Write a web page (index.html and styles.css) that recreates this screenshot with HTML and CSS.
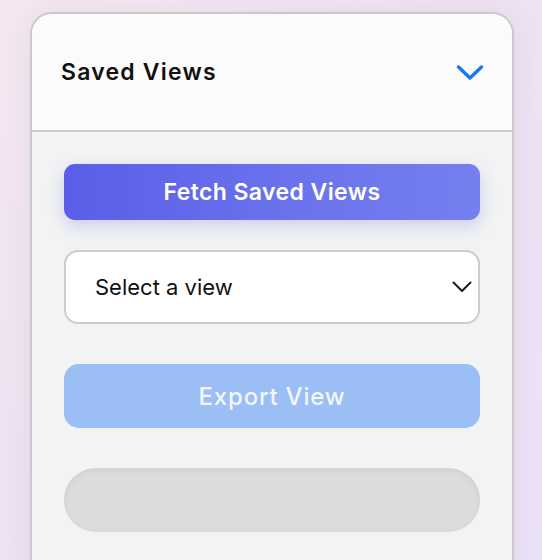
FILE: index.html
```html
<!DOCTYPE html>
<html>
<head>
<meta charset="utf-8">
<link rel="stylesheet" href="styles.css">
</head>
<body>
<div class="card">
  <div class="header">
    <h2 class="title">Saved Views</h2>
    <svg class="chev" width="28" height="18" viewBox="0 0 28 18"><path d="M2.5 3 L14 14 L25.5 3" fill="none" stroke="#1877f2" stroke-width="3.4" stroke-linecap="round" stroke-linejoin="round"/></svg>
  </div>
  <div class="body">
    <button class="btn-fetch">Fetch Saved Views</button>
    <div class="select">
      <span>Select a view</span>
      <svg class="sel-chev" width="20" height="12" viewBox="0 0 20 12"><path d="M1.5 1.5 L10 10 L18.5 1.5" fill="none" stroke="#1c1c1c" stroke-width="2" stroke-linecap="round" stroke-linejoin="round"/></svg>
    </div>
    <button class="btn-export">Export View</button>
    <div class="pill"></div>
  </div>
</div>
</body>
</html>
```
FILE: styles.css
```css
html, body {
  margin: 0;
  padding: 0;
  height: 100%;
}
body {
  background: linear-gradient(135deg, #f5e8f1 0%, #eee2f3 50%, #ece2f7 100%);
  font-family: Inter, "Noto Sans", sans-serif;
  overflow: hidden;
}
.card {
  margin: 12px 0 0 30px;
  width: 484px;
  box-sizing: border-box;
  border: 2px solid #c9c8ca;
  border-radius: 22px;
  overflow: hidden;
  background: #f2f3f3;
  height: 600px;
  box-shadow: 0 0 30px rgba(150, 120, 160, 0.12);
}
.header {
  height: 116px;
  background: #fbfbfb;
  border-bottom: 2px solid #cbcbcb;
  display: flex;
  align-items: center;
  justify-content: space-between;
  padding: 0 28px 0 29px;
}
.title {
  margin: 0;
  font-size: 23px;
  font-weight: 600;
  color: #111;
  letter-spacing: 1.2px;
}
.chev {
  display: block;
  position: relative;
  top: 1px;
}
.body {
  padding: 32px 32px 0 32px;
  display: flex;
  flex-direction: column;
}
.btn-fetch {
  height: 56px;
  border: none;
  border-radius: 11px;
  background: linear-gradient(90deg, #5b5de8 0%, #6a73ec 55%, #757fef 100%);
  color: #fff;
  font-family: inherit;
  font-size: 23px;
  font-weight: 600;
  letter-spacing: 0.4px;
  box-shadow: 0 6px 16px rgba(98, 100, 232, 0.25);
  padding: 0;
}
.select {
  margin-top: 30px;
  height: 74px;
  box-sizing: border-box;
  border: 2px solid #cdcdcd;
  border-radius: 14px;
  background: #fff;
  display: flex;
  align-items: center;
  justify-content: space-between;
  padding: 0 6px 0 29px;
  font-size: 22px;
  color: #111;
}
.sel-chev {
  display: block;
}
.btn-export {
  margin-top: 40px;
  height: 64px;
  border: none;
  border-radius: 15px;
  background: #9bbef4;
  color: rgba(255, 255, 255, 0.9);
  font-family: inherit;
  font-size: 24px;
  font-weight: 500;
  letter-spacing: 0.8px;
  padding: 0;
}
.pill {
  margin-top: 40px;
  height: 64px;
  border-radius: 32px;
  background: #dbdcdb;
  box-shadow: inset 0 2px 6px rgba(0, 0, 0, 0.06);
}
```
